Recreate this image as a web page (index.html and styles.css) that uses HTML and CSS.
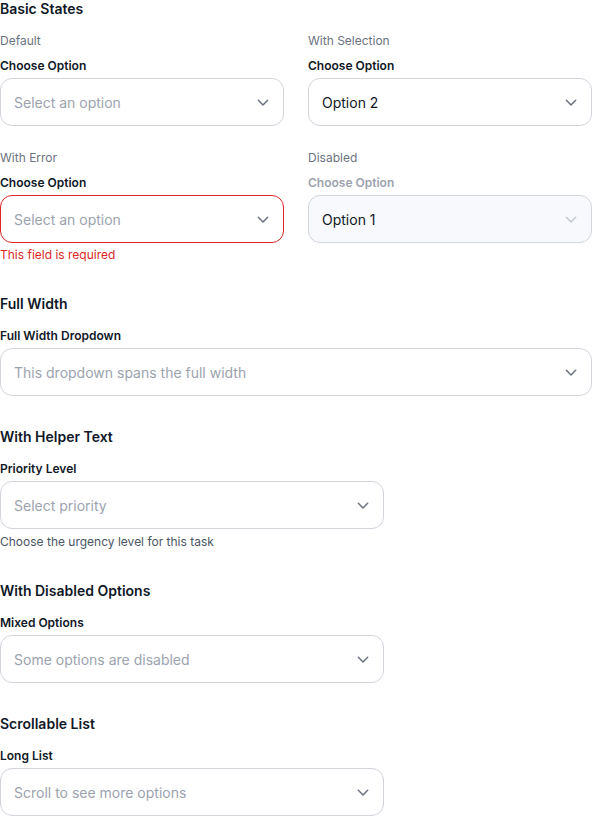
FILE: index.html
```html
<!DOCTYPE html>
<html>
<head>
<meta charset="utf-8">
<link rel="stylesheet" href="styles.css">
</head>
<body>
<div class="page">
  <section class="section">
    <h2 class="heading">Basic States</h2>
    <div class="grid">
      <div class="field">
        <div class="variant">Default</div>
        <label class="label">Choose Option</label>
        <div class="select"><span class="placeholder">Select an option</span><svg class="chev" viewBox="0 0 12 12"><path d="M2 4.5l4 4 4-4"/></svg></div>
      </div>
      <div class="field">
        <div class="variant">With Selection</div>
        <label class="label">Choose Option</label>
        <div class="select"><span class="value">Option 2</span><svg class="chev" viewBox="0 0 12 12"><path d="M2 4.5l4 4 4-4"/></svg></div>
      </div>
      <div class="field">
        <div class="variant">With Error</div>
        <label class="label">Choose Option</label>
        <div class="select error"><span class="placeholder">Select an option</span><svg class="chev" viewBox="0 0 12 12"><path d="M2 4.5l4 4 4-4"/></svg></div>
        <div class="error-text">This field is required</div>
      </div>
      <div class="field">
        <div class="variant">Disabled</div>
        <label class="label disabled-label">Choose Option</label>
        <div class="select disabled"><span class="value">Option 1</span><svg class="chev" viewBox="0 0 12 12"><path d="M2 4.5l4 4 4-4"/></svg></div>
      </div>
    </div>
  </section>

  <section class="section">
    <h2 class="heading">Full Width</h2>
    <div class="field">
      <label class="label">Full Width Dropdown</label>
      <div class="select"><span class="placeholder">This dropdown spans the full width</span><svg class="chev" viewBox="0 0 12 12"><path d="M2 4.5l4 4 4-4"/></svg></div>
    </div>
  </section>

  <section class="section">
    <h2 class="heading">With Helper Text</h2>
    <div class="field narrow">
      <label class="label">Priority Level</label>
      <div class="select"><span class="placeholder">Select priority</span><svg class="chev" viewBox="0 0 12 12"><path d="M2 4.5l4 4 4-4"/></svg></div>
      <div class="helper">Choose the urgency level for this task</div>
    </div>
  </section>

  <section class="section">
    <h2 class="heading">With Disabled Options</h2>
    <div class="field narrow">
      <label class="label">Mixed Options</label>
      <div class="select"><span class="placeholder">Some options are disabled</span><svg class="chev" viewBox="0 0 12 12"><path d="M2 4.5l4 4 4-4"/></svg></div>
    </div>
  </section>

  <section class="section">
    <h2 class="heading">Scrollable List</h2>
    <div class="field narrow">
      <label class="label">Long List</label>
      <div class="select"><span class="placeholder">Scroll to see more options</span><svg class="chev" viewBox="0 0 12 12"><path d="M2 4.5l4 4 4-4"/></svg></div>
    </div>
  </section>
</div>
</body>
</html>
```
FILE: styles.css
```css
* { box-sizing: border-box; }
body {
  margin: 0;
  font-family: Inter, "Noto Sans", sans-serif;
  color: #111827;
  background: #ffffff;
}
.page {
  width: 592px;
  display: flex;
  flex-direction: column;
  gap: 32px;
}
.section {
  display: flex;
  flex-direction: column;
}
.heading {
  margin: 0 0 16px 0;
  font-size: 14px;
  line-height: 17px;
  font-weight: 600;
  color: #111827;
}
.grid {
  display: grid;
  grid-template-columns: 284px 284px;
  column-gap: 24px;
  row-gap: 24px;
}
.field {
  display: flex;
  flex-direction: column;
}
.narrow { width: 384px; }
.variant {
  font-size: 12px;
  line-height: 16px;
  color: #6b7280;
  margin-bottom: 9px;
}
.label {
  font-size: 12px;
  line-height: 16px;
  font-weight: 600;
  color: #111827;
  margin-bottom: 4px;
}
.disabled-label { color: #9ca3af; }
.select {
  height: 48px;
  border: 1px solid #d1d5db;
  border-radius: 12px;
  background: #fff;
  display: flex;
  align-items: center;
  justify-content: space-between;
  padding: 0 13px 0 13px;
  font-size: 14px;
}
.placeholder { color: #9ca3af; }
.value { color: #111827; }
.select.error { border-color: #dc2626; }
.select.disabled { background: #f8f9fc; border-color: #d1d5db; }
.chev {
  width: 14px;
  height: 14px;
  fill: none;
  stroke: #6b7280;
  stroke-width: 1.3;
  stroke-linecap: round;
  stroke-linejoin: round;
}
.select.disabled .chev { stroke: #c4c8cf; }
.error-text {
  margin-top: 4px;
  font-size: 12px;
  line-height: 16px;
  color: #dc2626;
}
.helper {
  margin-top: 5px;
  font-size: 12px;
  line-height: 16px;
  color: #4b5563;
}
```
